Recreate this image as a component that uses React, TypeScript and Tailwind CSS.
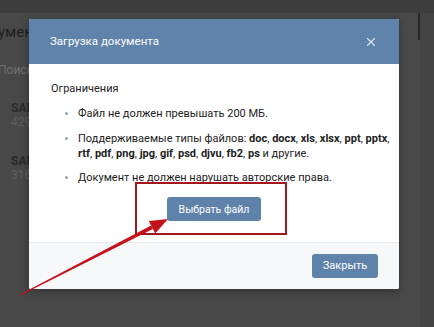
import { X } from "lucide-react";

const font = { fontFamily: "Roboto, 'Open Sans', 'DejaVu Sans', sans-serif" };

const Arrow = () => (
  <svg className="pointer-events-none absolute left-0 top-0" width="434" height="327" viewBox="0 0 434 327">
    <polygon points="19.8,294.6 20.2,295.4 152.9,229 151.1,225.4" fill="#c3121a" />
    <polygon points="168,219 148.8,221 155.2,233.4" fill="#c3121a" />
  </svg>
);

const Background = () => (
  <div className="flex h-full w-full flex-col bg-[#3d3d3d]">
    <div className="h-[13px]" />
    <div className="flex flex-1">
      <div className="flex w-[400px] flex-col bg-[#484848]">
        <div className="ml-[-2px] mt-[10px] text-[15px] leading-[18px] text-[#1f1f1f]">ументы</div>
        <div className="mt-[22px] ml-[-2px] text-[12px] leading-[14px] text-[#707070]">Поиск</div>
        <div className="mt-[24px] ml-[11px] text-[12px] font-bold leading-[14px] text-[#2a2a2a]">SAM</div>
        <div className="ml-[11px] text-[12px] leading-[14px] text-[#5e5e5e]">429</div>
        <div className="mt-[25px] ml-[11px] text-[12px] font-bold leading-[14px] text-[#2a2a2a]">SAM</div>
        <div className="ml-[11px] text-[12px] leading-[14px] text-[#5e5e5e]">316</div>
      </div>
      <div className="flex w-[20px] flex-col bg-[#4a4a4a]">
        <div className="ml-[18px] h-[27px] w-[2px] bg-[#262626]" />
      </div>
      <div className="flex-1 bg-[#444444]" />
    </div>
  </div>
);

const Bullet = ({ children }: { children: React.ReactNode }) => (
  <li className="flex">
    <span className="mt-[6px] ml-[14px] mr-[10px] h-[3px] w-[3px] shrink-0 rounded-full bg-[#9aa2ad]" />
    <span>{children}</span>
  </li>
);

const Modal = () => (
  <div className="absolute left-[29px] top-[19px] flex h-[270px] w-[370px] flex-col overflow-hidden rounded-[2px] bg-white shadow-[0_2px_8px_rgba(0,0,0,0.35)]">
    <div className="flex h-[45px] items-center justify-between bg-[#5f83aa] pl-[21px] pr-[21px]">
      <span className="text-[11.5px] text-white">Загрузка документа</span>
      <X size={14} strokeWidth={2} color="#dbe6f2" />
    </div>
    <div className="flex flex-1 flex-col px-[22px] pt-[17px] text-[11px] leading-[15px] text-[#222]">
      <div>Ограничения</div>
      <ul className="mt-[10px] flex flex-col gap-[9.5px]">
        <Bullet>Файл не должен превышать 200 МБ.</Bullet>
        <Bullet>
          <span className="whitespace-nowrap">
            Поддерживаемые типы файлов: <b>doc</b>, <b>docx</b>, <b>xls</b>, <b>xlsx</b>, <b>ppt</b>, <b>pptx</b>,
          </span>
          <br />
          <span className="whitespace-nowrap">
            <b>rtf</b>, <b>pdf</b>, <b>png</b>, <b>jpg</b>, <b>gif</b>, <b>psd</b>, <b>djvu</b>, <b>fb2</b>, <b>ps</b> и другие.
          </span>
        </Bullet>
        <Bullet>Документ не должен нарушать авторские права.</Bullet>
      </ul>
      <div className="ml-[84px] mt-[-3px] flex h-[53px] w-[152px] border-2 border-[#a3161c] pl-[30px] pt-[13px]">
        <div className="flex h-[24px] w-[94px] items-center justify-center rounded-[3px] bg-[#5e82a9] text-[10.5px] text-white">
          Выбрать файл
        </div>
      </div>
    </div>
    <div className="flex h-[47px] items-center justify-end border-t border-[#e7e8ec] bg-[#f7f8fa] pr-[21px]">
      <div className="flex h-[24px] w-[66px] items-center justify-center rounded-[3px] bg-[#5e82a9] text-[11px] text-white">
        Закрыть
      </div>
    </div>
  </div>
);

export default function App() {
  return (
    <div className="relative h-[327px] w-[434px] overflow-hidden" style={font}>
      <Background />
      <Modal />
      <Arrow />
    </div>
  );
}
